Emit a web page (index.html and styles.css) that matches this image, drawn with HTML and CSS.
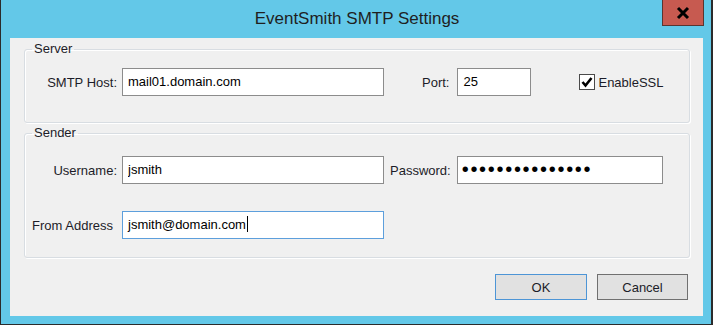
FILE: index.html
```html
<!DOCTYPE html>
<html lang="en">
<head>
  <meta charset="UTF-8">
  <title>EventSmith SMTP Settings</title>
  <link rel="stylesheet" href="styles.css">
</head>
<body>
  <div class="window">
    <div class="titlebar">
      <span class="title">EventSmith SMTP Settings</span>
      <button class="close-btn" aria-label="Close">
        <svg width="14" height="14" viewBox="0 0 14 14">
          <path d="M2 2 L12 12 M12 2 L2 12" stroke="#000" stroke-width="3" fill="none"/>
        </svg>
      </button>
    </div>

    <div class="client">
      <fieldset class="group group--server">
        <legend>Server</legend>
        <div class="row">
          <label class="field-label" for="host">SMTP Host:</label>
          <input class="textbox textbox--wide" id="host" type="text" value="mail01.domain.com">
          <label class="port-label" for="port">Port:</label>
          <input class="textbox textbox--port" id="port" type="text" value="25">
          <label class="check">
            <span class="check-box">
              <svg width="14" height="14" viewBox="0 0 14 14">
                <path d="M2.5 7 L5.5 10.5 L11.5 3" stroke="#000" stroke-width="2.6" fill="none"/>
              </svg>
            </span>
            EnableSSL
          </label>
        </div>
      </fieldset>

      <fieldset class="group group--sender">
        <legend>Sender</legend>
        <div class="row">
          <label class="field-label" for="user">Username:</label>
          <input class="textbox textbox--wide" id="user" type="text" value="jsmith">
          <label class="pass-label" for="pass">Password:</label>
          <input class="textbox textbox--pass" id="pass" type="password" value="secretpassword1">
        </div>
        <div class="row row--from">
          <label class="field-label field-label--from" for="from">From Address</label>
          <div class="textbox textbox--wide textbox--focused" id="from">jsmith@domain.com<span class="caret"></span></div>
        </div>
      </fieldset>

      <div class="buttons">
        <button class="btn btn--default">OK</button>
        <button class="btn">Cancel</button>
      </div>
    </div>
  </div>
</body>
</html>
```

FILE: styles.css
```css
body {
  margin: 0;
  font-family: "Liberation Sans", Arial, sans-serif;
  font-size: 13px;
  color: #1c1c28;
}
.window {
  position: relative;
  width: 713px;
  height: 325px;
  box-sizing: border-box;
  display: flex;
  flex-direction: column;
  background: #63c8e8;
  border-left: 1px solid #2b2b2b;
  border-right: 2px solid #2b2b2b;
  border-bottom: 1px solid #2b2b2b;
  padding: 0 8px 8px 9px;
}
.titlebar {
  height: 38px;
  display: flex;
  align-items: center;
  justify-content: center;
}
.title {
  font-size: 17px;
  color: #1f1f1f;
  margin-left: 1px;
}
.close-btn {
  position: absolute;
  top: 0;
  right: 7px;
  width: 42px;
  height: 26px;
  padding: 0;
  border: 1px solid #5a3530;
  border-top: none;
  background: #c75a50;
  display: flex;
  align-items: center;
  justify-content: center;
}
.client {
  flex: 1;
  background: #f0f0f0;
  display: flex;
  flex-direction: column;
}
.group {
  margin: 0 13px 0 14px;
  padding: 12px 0 26px 0;
  border: 1px solid #d8dde2;
  border-radius: 3px;
  box-shadow: inset 1px 1px 0 #fff, 1px 1px 0 #fff;
  min-width: 0;
}
.group legend {
  margin-left: 7px;
  padding: 0 2px;
  line-height: 14px;
  color: #1c1c28;
}
.group--server {
  margin-top: 4px;
}
.group--sender {
  margin-top: 3px;
  padding-top: 16px;
  padding-bottom: 18px;
}
.row {
  display: flex;
  align-items: center;
}
.row--from {
  margin-top: 27px;
}
.field-label {
  width: 92px;
  text-align: right;
  margin-right: 5px;
  flex-shrink: 0;
}
.field-label--from {
  box-sizing: border-box;
  padding-right: 4px;
}
.textbox {
  box-sizing: border-box;
  height: 28px;
  margin: 0;
  padding: 0 0 2px 5px;
  border: 1px solid #8c8c8c;
  background: #fff;
  font-family: "Liberation Sans", Arial, sans-serif;
  font-size: 13px;
  color: #000;
  outline: none;
}
div.textbox {
  display: flex;
  align-items: center;
}
.textbox--wide {
  width: 262px;
}
.textbox--port {
  width: 74px;
}
.textbox--pass {
  width: 206px;
  padding-left: 4px;
  font-size: 20px;
  letter-spacing: 1.7px;
}
.textbox--focused {
  border-color: #5d9fdc;
}
.caret {
  display: inline-block;
  width: 1px;
  height: 16px;
  margin-left: 1px;
  background: #000;
}
.port-label {
  margin-left: 38px;
  margin-right: 8px;
}
.pass-label {
  margin-left: 6px;
  margin-right: 6px;
}
.check {
  margin-left: 48px;
  display: flex;
  align-items: center;
}
.check-box {
  box-sizing: border-box;
  width: 16px;
  height: 16px;
  margin-right: 3px;
  border: 1px solid #4a4a4a;
  background: #fff;
  display: flex;
  align-items: center;
  justify-content: center;
}
.buttons {
  display: flex;
  justify-content: flex-end;
  gap: 10px;
  margin-top: 16px;
  padding-right: 15px;
}
.btn {
  box-sizing: border-box;
  width: 91px;
  height: 26px;
  padding: 0;
  border: 1px solid #707070;
  background: #e1e1e1;
  font-family: "Liberation Sans", Arial, sans-serif;
  font-size: 13px;
  color: #1c1c28;
}
.btn--default {
  width: 92px;
  border-color: #4d95d6;
}
```
